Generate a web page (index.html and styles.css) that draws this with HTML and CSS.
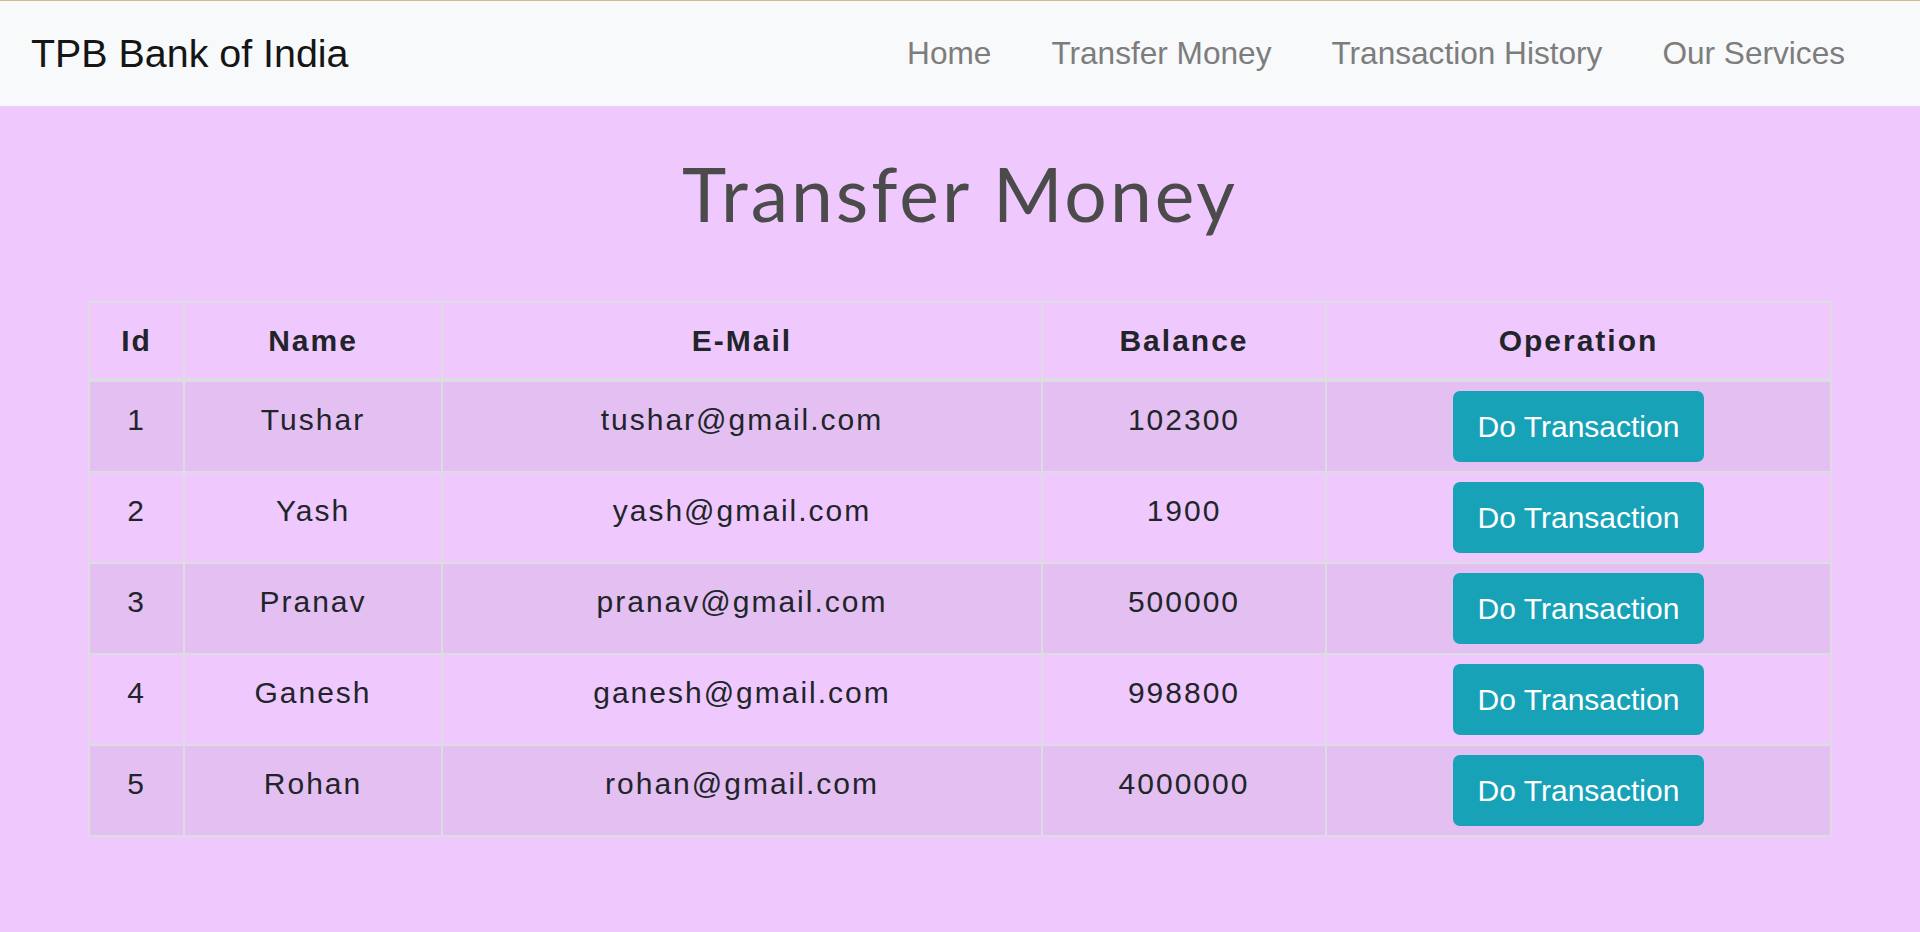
FILE: index.html
```html
<!DOCTYPE html>
<html lang="en">
<head>
<meta charset="utf-8">
<title>Transfer Money - TPB Bank of India</title>
<link rel="stylesheet" href="styles.css">
</head>
<body>
<nav class="navbar">
  <a class="brand" href="#">TPB Bank of India</a>
  <ul class="nav-links">
    <li><a href="#">Home</a></li>
    <li><a href="#">Transfer Money</a></li>
    <li><a href="#">Transaction History</a></li>
    <li><a href="#">Our Services</a></li>
  </ul>
</nav>
<main class="content">
  <h1 class="title">Transfer Money</h1>
  <table class="accounts">
    <colgroup>
      <col class="c-id"><col class="c-name"><col class="c-mail"><col class="c-bal"><col class="c-op">
    </colgroup>
    <thead>
      <tr><th>Id</th><th>Name</th><th>E-Mail</th><th>Balance</th><th>Operation</th></tr>
    </thead>
    <tbody>
      <tr class="odd"><td>1</td><td>Tushar</td><td>tushar@gmail.com</td><td>102300</td><td class="op"><button class="btn">Do Transaction</button></td></tr>
      <tr><td>2</td><td>Yash</td><td>yash@gmail.com</td><td>1900</td><td class="op"><button class="btn">Do Transaction</button></td></tr>
      <tr class="odd"><td>3</td><td>Pranav</td><td>pranav@gmail.com</td><td>500000</td><td class="op"><button class="btn">Do Transaction</button></td></tr>
      <tr><td>4</td><td>Ganesh</td><td>ganesh@gmail.com</td><td>998800</td><td class="op"><button class="btn">Do Transaction</button></td></tr>
      <tr class="odd"><td>5</td><td>Rohan</td><td>rohan@gmail.com</td><td>4000000</td><td class="op"><button class="btn">Do Transaction</button></td></tr>
    </tbody>
  </table>
</main>
</body>
</html>
```
FILE: styles.css
```css
* { box-sizing: border-box; }

html, body {
  margin: 0;
  padding: 0;
}

body {
  background: #efc9fe;
  font-family: "Liberation Sans", Arial, sans-serif;
  color: #212529;
  min-height: 100vh;
}

.navbar {
  display: flex;
  align-items: center;
  justify-content: space-between;
  height: 106px;
  border-top: 1px solid #d3b68c;
  background: #f8f9fa;
  padding: 0 45px 0 31px;
}

.brand {
  font-size: 39.4px;
  line-height: 1.2;
  color: #151515;
  text-decoration: none;
}

.nav-links {
  display: flex;
  list-style: none;
  margin: 0;
  padding: 0;
}

.nav-links a {
  display: block;
  padding: 0 30px;
  font-size: 31.6px;
  line-height: 1.5;
  color: #7d7d7d;
  text-decoration: none;
}

.content {
  padding: 0 88px 60px;
}

.title {
  margin: 42px 0 63px;
  text-align: center;
  font-family: Lato, "Open Sans", sans-serif;
  font-weight: 400;
  font-size: 75px;
  line-height: 1.2;
  letter-spacing: 3px;
  color: #4b4b4b;
}

.accounts {
  width: 100%;
  table-layout: fixed;
  border-collapse: collapse;
  border: 2px solid #dcdce2;
  text-align: center;
  font-size: 30px;
  letter-spacing: 2px;
  line-height: 1.5;
}

.c-id { width: 95px; }
.c-name { width: 258px; }
.c-mail { width: 600px; }
.c-bal { width: 284px; }

.accounts th,
.accounts td {
  border: 2px solid #dcdce2;
  padding: 15px 12px;
  vertical-align: top;
}

.accounts th {
  font-weight: 700;
  vertical-align: middle;
  border-bottom-width: 4px;
}

.accounts tr.odd td {
  background: #e3c0f1;
}

.accounts td.op {
  padding: 9px 12px;
  vertical-align: middle;
}

.btn {
  display: inline-block;
  height: 71px;
  padding: 0 25px;
  border: none;
  border-radius: 7px;
  background: #17a2b8;
  color: #fff;
  font-family: "Liberation Sans", Arial, sans-serif;
  font-size: 30px;
  line-height: 71px;
  letter-spacing: 0;
  cursor: pointer;
}
```
